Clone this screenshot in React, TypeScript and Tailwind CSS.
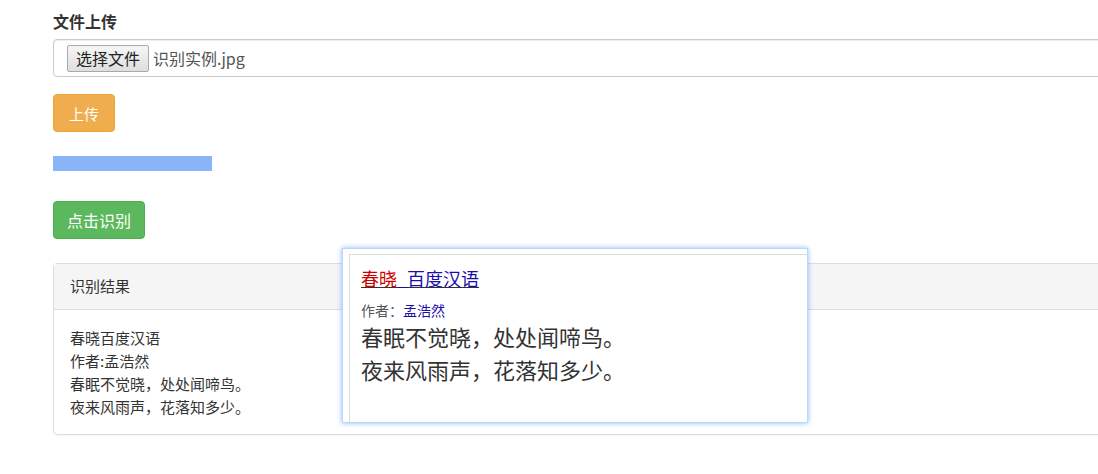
import React from "react";

const font = { fontFamily: '"Noto Sans CJK SC", "Liberation Sans", sans-serif' };

export default function App() {
  return (
    <div className="relative w-[1098px] h-[474px] overflow-hidden bg-white text-[#333]" style={font}>
      <div className="w-[1200px] pl-[53px] pt-[10px]">
        <label className="block text-[16px] font-bold leading-[22px]">文件上传</label>

        {/* file input */}
        <div className="mt-[7px] h-[38px] flex items-center gap-[4px] border border-[#ccc] rounded-[4px] pl-[13px] shadow-[inset_0_1px_1px_rgba(0,0,0,0.075)]">
          <button className="h-[27px] w-[82px] border border-[#a9a9a9] rounded-[2px] bg-gradient-to-b from-[#f6f6f6] to-[#dedede] text-[16px] text-[#222] leading-none">
            选择文件
          </button>
          <span className="text-[16px] text-[#555]">识别实例.jpg</span>
        </div>

        <button className="mt-[17px] h-[38px] px-[15px] rounded-[4px] bg-[#f0ad4e] border border-[#eea236] text-white text-[15px] leading-none">
          上传
        </button>

        {/* progress bar */}
        <div className="mt-[24px] w-[159px] h-[15px] bg-[#8ab4f8]" />

        <button className="mt-[30px] h-[38px] px-[13px] rounded-[4px] bg-[#5cb85c] border border-[#4cae4c] text-white text-[16px] leading-none">
          点击识别
        </button>

        {/* result panel */}
        <div className="mt-[24px] border border-[#ddd] rounded-[4px] shadow-[0_1px_1px_rgba(0,0,0,0.05)]">
          <div className="h-[46px] flex items-center px-4 bg-[#f5f5f5] border-b border-[#ddd] text-[15px]">
            识别结果
          </div>
          <div className="px-4 pt-[16px] pb-[16px] text-[15px] leading-[23px]">
            <div>春晓百度汉语</div>
            <div>作者:孟浩然</div>
            <div>春眠不觉晓，处处闻啼鸟。</div>
            <div>夜来风雨声，花落知多少。</div>
          </div>
        </div>
      </div>

      {/* popup preview */}
      <div className="absolute left-[342px] top-[248px] w-[466px] h-[175px] bg-white border border-[#bcd6f5] shadow-[0_0_5px_rgba(110,165,240,0.8)] pl-[6px] pt-[5px]">
        <div className="h-full border-l border-t border-[#ddd] pl-[11px] pt-[12px]">
          <a className="text-[18px] leading-[22px] underline">
            <span className="text-[#c00]">春晓</span>
            <span className="text-[#1a0dab]">_百度汉语</span>
          </a>
          <div className="mt-[10px] text-[14px] leading-[18px] text-[#555]">
            作者：<span className="text-[#1a0dab]">孟浩然</span>
          </div>
          <div className="mt-[1px] text-[22px] leading-[33px] text-[#333]">
            <div>春眠不觉晓，处处闻啼鸟。</div>
            <div>夜来风雨声，花落知多少。</div>
          </div>
        </div>
      </div>
    </div>
  );
}
